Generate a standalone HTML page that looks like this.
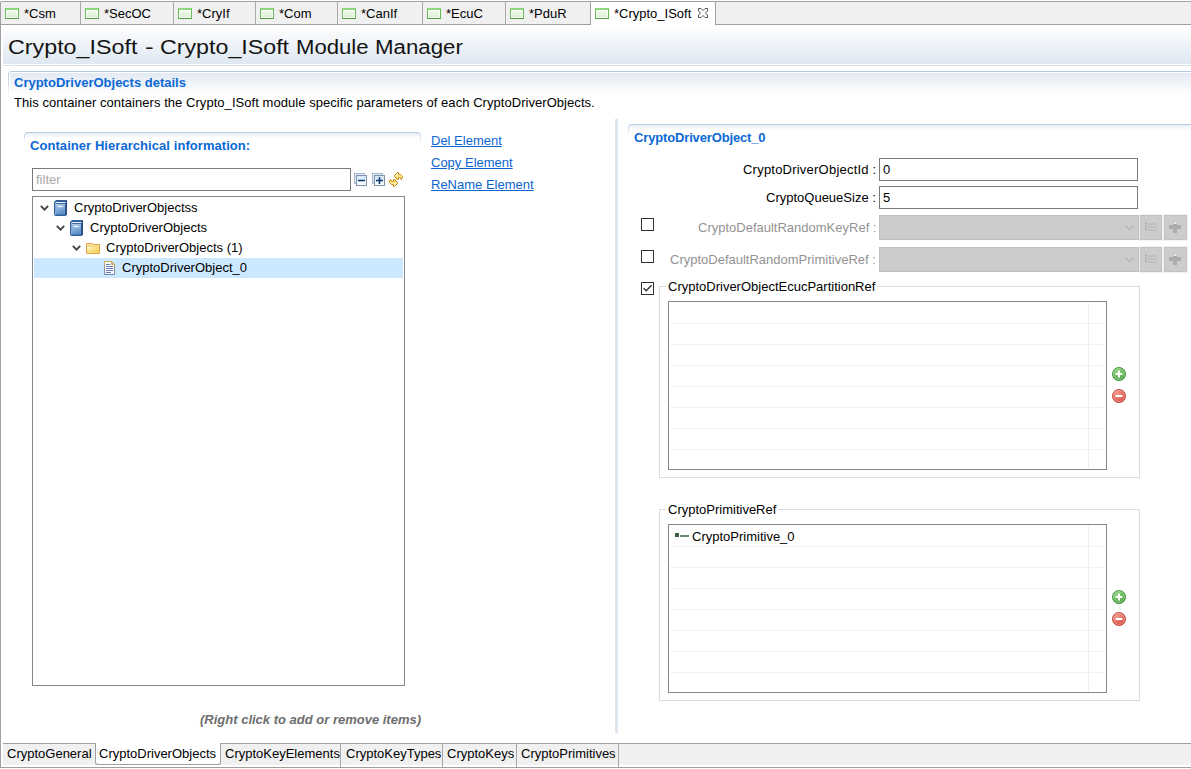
<!DOCTYPE html>
<html><head><meta charset="utf-8">
<style>
*{box-sizing:border-box;margin:0;padding:0}
html,body{width:1191px;height:769px;overflow:hidden;background:#fff;position:relative;font-family:"Liberation Sans",sans-serif;font-size:13px;color:#000}
.a{position:absolute}
svg{position:absolute;overflow:visible}
.t{position:absolute;white-space:nowrap;line-height:16px;font-size:13px}
.b{font-weight:bold}
.blue{color:#0b68d4}
.link{color:#0b64d0;text-decoration:underline}
.hl{position:absolute;height:1px}
.vl{position:absolute;width:1px}
.ticon{position:absolute;top:8px;width:14px;height:11px;border:1px solid #66bb55;border-top:2px solid #8ed87c;border-bottom-color:#4f9c40;background:#fff}
.ticon i{display:block;width:100%;height:100%;background:linear-gradient(#f0f9ec,#d9eed0);box-shadow:inset 0 0 0 1px rgba(255,255,255,0.85)}
.title{position:absolute;top:35px;font-size:20px;line-height:24px;color:#141414;white-space:nowrap;transform-origin:0 0}
.cb{position:absolute;left:641px;width:13px;height:13px;border:1px solid #333;background:#fff}
.combo{position:absolute;left:879px;width:260px;height:25px;background:#cccccc;border:1px solid #bfbfbf}
.btn{position:absolute;height:25px;background:#cccccc;border:1px solid #c2c2c2;outline:1px solid #f2f2f2}
.grp{position:absolute;left:659px;width:481px;height:192px;border:1px solid #dcdcdc}
.tbl{position:absolute;left:668px;width:439px;height:169px;border:1px solid #828790;background:#fff}
.gl{position:absolute;left:670px;width:435px;height:1px;background:#f0f0f0}
.cl{position:absolute;left:1088px;width:1px;background:#e6eef8}
</style></head><body>

<!-- ========== top tab bar ========== -->
<div class="a" style="left:0;top:1px;width:1191px;height:24px;background:#f0f0f0"></div>
<div class="hl" style="left:1px;top:1px;width:1190px;background:#a0a0a0"></div>
<div class="hl" style="left:0;top:24px;width:1191px;background:#a0a0a0"></div>
<div class="vl" style="left:0;top:2px;height:766px;background:#a0a0a0"></div>

<div class="vl" style="left:80px;top:2px;height:22px;background:#a8a8a8"></div>
<div class="vl" style="left:173px;top:2px;height:22px;background:#a8a8a8"></div>
<div class="vl" style="left:255px;top:2px;height:22px;background:#a8a8a8"></div>
<div class="vl" style="left:337px;top:2px;height:22px;background:#a8a8a8"></div>
<div class="vl" style="left:422px;top:2px;height:22px;background:#a8a8a8"></div>
<div class="vl" style="left:505px;top:2px;height:22px;background:#a8a8a8"></div>
<!-- active tab -->
<div class="a" style="left:590px;top:1px;width:126px;height:24px;background:#fff;border-left:1px solid #a0a0a0;border-right:1px solid #a0a0a0;border-top:1px solid #a0a0a0;border-radius:2px 2px 0 0"></div>

<div class="ticon" style="left:5px"><i></i></div><div class="t" style="left:24px;top:6px">*Csm</div>
<div class="ticon" style="left:85px"><i></i></div><div class="t" style="left:104px;top:6px">*SecOC</div>
<div class="ticon" style="left:178px"><i></i></div><div class="t" style="left:197px;top:6px">*CryIf</div>
<div class="ticon" style="left:260px"><i></i></div><div class="t" style="left:279px;top:6px">*Com</div>
<div class="ticon" style="left:342px"><i></i></div><div class="t" style="left:361px;top:6px">*CanIf</div>
<div class="ticon" style="left:427px"><i></i></div><div class="t" style="left:446px;top:6px">*EcuC</div>
<div class="ticon" style="left:510px"><i></i></div><div class="t" style="left:529px;top:6px">*PduR</div>
<div class="ticon" style="left:595px"><i></i></div><div class="t" style="left:614px;top:6px">*Crypto_ISoft</div>
<svg style="left:698px;top:8px" width="10" height="10" viewBox="0 0 10 10"><path d="M0.5 0.5h2.5l2 2l2-2h2.5v2.5l-2 2l2 2v2.5h-2.5l-2-2l-2 2h-2.5v-2.5l2-2l-2-2z" fill="none" stroke="#555" stroke-width="1"/></svg>

<!-- ========== header ========== -->
<div class="a" style="left:3px;top:25px;width:1188px;height:39px;background:linear-gradient(#ffffff,#dfe7f1)"></div>
<div class="hl" style="left:3px;top:65px;width:1188px;background:#d6e0eb"></div>
<div class="title" style="left:7.8px;transform:scaleX(1.1636)">Crypto_ISoft</div>
<div class="title" style="left:144.5px;transform:scaleX(1.3)">-</div>
<div class="title" style="left:160.3px;transform:scaleX(1.1609)">Crypto_ISoft</div>
<div class="title" style="left:296.1px;transform:scaleX(1.1063)">Module</div>
<div class="title" style="left:375.1px;transform:scaleX(1.113)">Manager</div>

<!-- details section -->
<div class="a" style="left:8px;top:71px;width:1183px;height:24px;border-top:1px solid #b4c8de;border-left:1px solid transparent;border-radius:4px 0 0 0;box-shadow:inset 1px 1px 0 #fff;background:linear-gradient(#e2e9f3,#ffffff)"></div>
<div class="a" style="left:8px;top:73px;width:1px;height:24px;background:linear-gradient(#bccee2,rgba(220,230,240,0))"></div>
<div class="t b blue" style="left:14px;top:75px">CryptoDriverObjects details</div>
<div class="t" style="left:14px;top:95px;letter-spacing:0.05px">This container containers the Crypto_ISoft module specific parameters of each CryptoDriverObjects.</div>

<!-- ========== left panel ========== -->
<div class="a" style="left:24px;top:132px;width:397px;height:6px;border-top:1px solid #b9cbe0;border-left:1px solid transparent;border-right:1px solid transparent;border-radius:4px 4px 0 0;background:linear-gradient(#e7edf5,#ffffff)"></div>
<div class="a" style="left:24px;top:134px;width:1px;height:8px;background:linear-gradient(#c4d3e4,rgba(230,236,244,0))"></div>
<div class="a" style="left:420px;top:134px;width:1px;height:8px;background:linear-gradient(#c4d3e4,rgba(230,236,244,0))"></div>
<div class="t b blue" style="left:30px;top:138px;letter-spacing:0.06px">Container Hierarchical information:</div>

<div class="a" style="left:32px;top:168px;width:319px;height:23px;border:1px solid #7a7a7a;background:#fff"></div>
<div class="t" style="left:36px;top:172px;color:#a8a8a8">filter</div>

<!-- collapse / expand / sync icons -->
<svg style="left:354px;top:173px" width="13" height="13" viewBox="0 0 13 13">
 <defs><linearGradient id="cg" x1="0" y1="0" x2="0" y2="1"><stop offset="0" stop-color="#cfe6fa"/><stop offset="1" stop-color="#ffffff"/></linearGradient></defs><rect x="0.5" y="0.5" width="10" height="10" fill="#dcebfa" stroke="#a9b8cc"/>
 <rect x="2.5" y="2.5" width="10" height="10" fill="url(#cg)" stroke="#8292a8"/>
 <path d="M4 7.5h7" stroke="#0a3a6c" stroke-width="1.5"/>
</svg>
<svg style="left:372px;top:173px" width="13" height="13" viewBox="0 0 13 13">
 <rect x="0.5" y="0.5" width="10" height="10" fill="#dcebfa" stroke="#a9b8cc"/>
 <rect x="2.5" y="2.5" width="10" height="10" fill="url(#cg)" stroke="#8292a8"/>
 <path d="M4 7.5h7M7.5 4v7" stroke="#0a3a6c" stroke-width="1.5"/>
</svg>
<svg style="left:388px;top:171px" width="16" height="16" viewBox="0 0 16 16">
 <defs><linearGradient id="gy" x1="0" y1="0" x2="0" y2="1"><stop offset="0" stop-color="#fffbe6"/><stop offset="0.5" stop-color="#fcea96"/><stop offset="1" stop-color="#f0c440"/></linearGradient></defs>
 <path d="M9.5 1.5H10.5V3.5H12.5L14.5 5.5V6.5L13.5 8.5L11.5 6.5H10.5V8.5H9.5L6.5 5.5V4.5Z" fill="url(#gy)" stroke="#c4840c" stroke-width="1" stroke-linejoin="miter"/>
 <path d="M9.5 1.5H10.5V3.5H12.5L14.5 5.5V6.5L13.5 8.5L11.5 6.5H10.5V8.5H9.5L6.5 5.5V4.5Z" transform="rotate(180 8 8.5)" fill="url(#gy)" stroke="#c4840c" stroke-width="1" stroke-linejoin="miter"/>
</svg>

<!-- tree -->
<div class="a" style="left:32px;top:196px;width:373px;height:490px;border:1px solid #828790;background:#fff"></div>
<div class="a" style="left:34px;top:258px;width:369px;height:20px;background:#cce8ff"></div>

<svg style="left:40px;top:205px" width="9" height="6" viewBox="0 0 9 6"><path d="M0.8 0.8L4.5 4.6L8.2 0.8" fill="none" stroke="#404040" stroke-width="1.8"/></svg>
<svg style="left:56px;top:225px" width="9" height="6" viewBox="0 0 9 6"><path d="M0.8 0.8L4.5 4.6L8.2 0.8" fill="none" stroke="#404040" stroke-width="1.8"/></svg>
<svg style="left:72px;top:245px" width="9" height="6" viewBox="0 0 9 6"><path d="M0.8 0.8L4.5 4.6L8.2 0.8" fill="none" stroke="#404040" stroke-width="1.8"/></svg>

<svg style="left:53px;top:199px" width="15" height="18" viewBox="0 0 15 18"><defs><linearGradient id="bk" x1="0" y1="0" x2="0.3" y2="1"><stop offset="0" stop-color="#b3d0ec"/><stop offset="1" stop-color="#5b90c9"/></linearGradient></defs>
 <path d="M3 1H14V15.2L12.8 17H2.2L1 15.8V3Z" fill="#35609b"/>
 <rect x="2" y="3" width="1" height="13" fill="#86acd6"/>
 <rect x="3" y="3" width="10.5" height="1.1" fill="#e9eff7"/>
 <rect x="3" y="5" width="9" height="10.5" fill="url(#bk)"/>
 <rect x="5" y="7" width="5" height="1.1" fill="#f6f9fd"/>
 <rect x="12.5" y="2" width="1.5" height="13.5" fill="#294c82"/>
</svg>
<svg style="left:69px;top:219px" width="15" height="18" viewBox="0 0 15 18">
 <path d="M3 1H14V15.2L12.8 17H2.2L1 15.8V3Z" fill="#35609b"/>
 <rect x="2" y="3" width="1" height="13" fill="#86acd6"/>
 <rect x="3" y="3" width="10.5" height="1.1" fill="#e9eff7"/>
 <rect x="3" y="5" width="9" height="10.5" fill="url(#bk)"/>
 <rect x="5" y="7" width="5" height="1.1" fill="#f6f9fd"/>
 <rect x="12.5" y="2" width="1.5" height="13.5" fill="#294c82"/>
</svg>
<svg style="left:86px;top:243px" width="14" height="11" viewBox="0 0 14 11">
 <defs><linearGradient id="fd" x1="0" y1="0" x2="1" y2="1"><stop offset="0" stop-color="#fff6cf"/><stop offset="1" stop-color="#f1cc3a"/></linearGradient></defs>
 <path d="M0.5 0.5H6.5L7.5 1.5H13.5V10.5H0.5Z" fill="#fbe9a8" stroke="#e2a244"/>
 <path d="M1.5 3.5H12.5V9.5H1.5Z" fill="url(#fd)"/>
 <path d="M1.5 3H12.5" stroke="#e9bf6a" stroke-width="0.8"/>
</svg>
<svg style="left:104px;top:261px" width="11" height="14" viewBox="0 0 11 14">
 <defs><linearGradient id="dg" x1="0" y1="0" x2="0" y2="1"><stop offset="0" stop-color="#c9a658"/><stop offset="1" stop-color="#7486b0"/></linearGradient></defs>
 <path d="M0.5 0.5H7.5L10.5 3.5V13.5H0.5Z" fill="#f7f9fd" stroke="url(#dg)"/>
 <path d="M7.5 0.5L10.5 3.5H7.5Z" fill="#dcb462" stroke="#c9a658" stroke-width="0.8"/>
 <path d="M2 3.5H6M2 5.5H9M2 7.5H9M2 9.5H9M2 11.5H7" stroke="#6a80b2" stroke-width="1"/>
</svg>

<div class="t" style="left:74px;top:200px">CryptoDriverObjectss</div>
<div class="t" style="left:90px;top:220px">CryptoDriverObjects</div>
<div class="t" style="left:106px;top:240px">CryptoDriverObjects (1)</div>
<div class="t" style="left:122px;top:260px">CryptoDriverObject_0</div>

<div class="t b" style="left:200px;top:712px;font-style:italic;color:#6e6e6e">(Right click to add or remove items)</div>

<div class="t link" style="left:431px;top:133px">Del Element</div>
<div class="t link" style="left:431px;top:155px">Copy Element</div>
<div class="t link" style="left:431px;top:177px">ReName Element</div>

<!-- divider -->
<div class="a" style="left:615px;top:119px;width:3px;height:614px;background:#dde5ef"></div>

<!-- ========== right panel ========== -->
<div class="a" style="left:628px;top:124px;width:563px;height:6px;border-top:1px solid #b9cbe0;border-left:1px solid transparent;border-radius:4px 0 0 0;background:linear-gradient(#e7edf5,#ffffff)"></div>
<div class="a" style="left:628px;top:126px;width:1px;height:8px;background:linear-gradient(#c4d3e4,rgba(230,236,244,0))"></div>
<div class="t b blue" style="left:634px;top:130px;letter-spacing:-0.15px">CryptoDriverObject_0</div>

<div class="t" style="left:743px;top:162px;letter-spacing:0.22px">CryptoDriverObjectId :</div>
<div class="a" style="left:879px;top:158px;width:259px;height:23px;border:1px solid #7a7a7a"></div>
<div class="t" style="left:883px;top:162px">0</div>
<div class="t" style="left:766px;top:190px">CryptoQueueSize :</div>
<div class="a" style="left:879px;top:186px;width:259px;height:23px;border:1px solid #7a7a7a"></div>
<div class="t" style="left:883px;top:190px">5</div>

<div class="cb" style="top:218px"></div>
<div class="t" style="left:698px;top:220px;color:#939393">CryptoDefaultRandomKeyRef :</div>
<div class="combo" style="top:215px"></div>
<div class="btn" style="left:1140px;top:215px;width:22px"></div>
<div class="btn" style="left:1164px;top:215px;width:23px"></div>

<div class="cb" style="top:250px"></div>
<div class="t" style="left:670px;top:252px;color:#939393">CryptoDefaultRandomPrimitiveRef :</div>
<div class="combo" style="top:247px"></div>
<div class="btn" style="left:1140px;top:247px;width:22px"></div>
<div class="btn" style="left:1164px;top:247px;width:23px"></div>

<!-- combo glyphs -->
<svg style="left:1125px;top:225px" width="9" height="6" viewBox="0 0 9 6"><path d="M0.5 0.5L4.5 4.5L8.5 0.5" fill="none" stroke="#a6a6a6" stroke-width="1"/></svg>
<svg style="left:1125px;top:257px" width="9" height="6" viewBox="0 0 9 6"><path d="M0.5 0.5L4.5 4.5L8.5 0.5" fill="none" stroke="#a6a6a6" stroke-width="1"/></svg>
<svg style="left:1145px;top:223px" width="12" height="9" viewBox="0 0 12 9"><path d="M0 0.5h2M0 3.5h2M0 6.5h2" stroke="#a8a8a8" stroke-width="1.4"/><path d="M3 1h9M3 4h9M3 7h9" stroke="#b0b0b0" stroke-width="0.9"/></svg>
<svg style="left:1145px;top:255px" width="12" height="9" viewBox="0 0 12 9"><path d="M0 0.5h2M0 3.5h2M0 6.5h2" stroke="#a8a8a8" stroke-width="1.4"/><path d="M3 1h9M3 4h9M3 7h9" stroke="#b0b0b0" stroke-width="0.9"/></svg>
<svg style="left:1169px;top:221px" width="12" height="12" viewBox="0 0 12 12"><path d="M4 0h4v4h4v4h-4v4h-4v-4h-4v-4h4z" fill="#acacac"/><rect x="4.5" y="0.5" width="3" height="2.5" fill="#e6e6e6"/></svg>
<svg style="left:1169px;top:253px" width="12" height="12" viewBox="0 0 12 12"><path d="M4 0h4v4h4v4h-4v4h-4v-4h-4v-4h4z" fill="#acacac"/><rect x="4.5" y="0.5" width="3" height="2.5" fill="#e6e6e6"/></svg>

<div class="cb" style="top:282px"></div>
<svg style="left:641px;top:282px" width="13" height="13" viewBox="0 0 13 13"><path d="M2.6 6.3L5.2 8.8L10.6 3.2" fill="none" stroke="#333" stroke-width="1.4"/></svg>

<!-- group 1 -->
<div class="grp" style="top:286px"></div>
<div class="t" style="left:666px;top:279px;padding:0 2px;background:#fff">CryptoDriverObjectEcucPartitionRef</div>
<div class="tbl" style="top:301px"></div>
<div class="cl" style="top:303px;height:165px"></div>
<div class="gl" style="top:323px"></div><div class="gl" style="top:344px"></div><div class="gl" style="top:365px"></div><div class="gl" style="top:386px"></div><div class="gl" style="top:407px"></div><div class="gl" style="top:428px"></div><div class="gl" style="top:449px"></div>

<!-- group 2 -->
<div class="grp" style="top:509px"></div>
<div class="t" style="left:666px;top:502px;padding:0 2px;background:#fff">CryptoPrimitiveRef</div>
<div class="tbl" style="top:524px"></div>
<div class="cl" style="top:526px;height:165px"></div>
<div class="gl" style="top:546px"></div><div class="gl" style="top:567px"></div><div class="gl" style="top:588px"></div><div class="gl" style="top:609px"></div><div class="gl" style="top:630px"></div><div class="gl" style="top:651px"></div><div class="gl" style="top:672px"></div>
<div class="a" style="left:675px;top:533px;width:4px;height:4px;background:#3c5e40"></div>
<div class="a" style="left:680px;top:535px;width:9px;height:2px;background:#6d8a70"></div>
<div class="t" style="left:692px;top:529px">CryptoPrimitive_0</div>

<!-- add/remove buttons -->
<svg style="left:1112px;top:367px" width="14" height="14" viewBox="0 0 14 14">
 <defs><radialGradient id="gg" cx="0.4" cy="0.35" r="0.7"><stop offset="0" stop-color="#9ad98a"/><stop offset="1" stop-color="#3d9a35"/></radialGradient>
 <radialGradient id="rg" cx="0.4" cy="0.35" r="0.7"><stop offset="0" stop-color="#f5a090"/><stop offset="1" stop-color="#d2413a"/></radialGradient></defs>
 <circle cx="7" cy="7" r="6.6" fill="url(#gg)" stroke="#3f8f38" stroke-width="0.8"/>
 <circle cx="7" cy="7" r="5.4" fill="none" stroke="#c8ecc0" stroke-opacity="0.7" stroke-width="0.7"/><path d="M7 3.5v7M3.5 7h7" stroke="#fff" stroke-width="2"/>
</svg>
<svg style="left:1112px;top:389px" width="14" height="14" viewBox="0 0 14 14">
 <circle cx="7" cy="7" r="6.6" fill="url(#rg)" stroke="#c24038" stroke-width="0.8"/>
 <circle cx="7" cy="7" r="5.4" fill="none" stroke="#fbd0c8" stroke-opacity="0.7" stroke-width="0.7"/><path d="M3.5 7h7" stroke="#fff" stroke-width="2"/>
</svg>
<svg style="left:1112px;top:590px" width="14" height="14" viewBox="0 0 14 14">
 <circle cx="7" cy="7" r="6.6" fill="url(#gg)" stroke="#3f8f38" stroke-width="0.8"/>
 <circle cx="7" cy="7" r="5.4" fill="none" stroke="#c8ecc0" stroke-opacity="0.7" stroke-width="0.7"/><path d="M7 3.5v7M3.5 7h7" stroke="#fff" stroke-width="2"/>
</svg>
<svg style="left:1112px;top:612px" width="14" height="14" viewBox="0 0 14 14">
 <circle cx="7" cy="7" r="6.6" fill="url(#rg)" stroke="#c24038" stroke-width="0.8"/>
 <circle cx="7" cy="7" r="5.4" fill="none" stroke="#fbd0c8" stroke-opacity="0.7" stroke-width="0.7"/><path d="M3.5 7h7" stroke="#fff" stroke-width="2"/>
</svg>

<!-- ========== bottom tabs ========== -->
<div class="a" style="left:3px;top:743px;width:1188px;height:22px;background:#f0f0f0"></div>
<div class="hl" style="left:3px;top:743px;width:1188px;background:#a0a0a0"></div>
<div class="hl" style="left:1px;top:767px;width:1190px;background:#a0a0a0"></div>
<div class="a" style="left:95px;top:743px;width:126px;height:22px;background:#fff;border-left:1px solid #a0a0a0;border-right:1px solid #a0a0a0;border-bottom:1px solid #a0a0a0;border-radius:0 0 3px 3px"></div>
<div class="vl" style="left:340px;top:744px;height:23px;background:#a8a8a8"></div>
<div class="vl" style="left:442px;top:744px;height:23px;background:#a8a8a8"></div>
<div class="vl" style="left:516px;top:744px;height:23px;background:#a8a8a8"></div>
<div class="vl" style="left:618px;top:744px;height:23px;background:#a8a8a8"></div>
<div class="t" style="left:7px;top:746px">CryptoGeneral</div>
<div class="t" style="left:99px;top:746px">CryptoDriverObjects</div>
<div class="t" style="left:225px;top:746px">CryptoKeyElements</div>
<div class="t" style="left:346px;top:746px">CryptoKeyTypes</div>
<div class="t" style="left:447px;top:746px">CryptoKeys</div>
<div class="t" style="left:521px;top:746px">CryptoPrimitives</div>

</body></html>
